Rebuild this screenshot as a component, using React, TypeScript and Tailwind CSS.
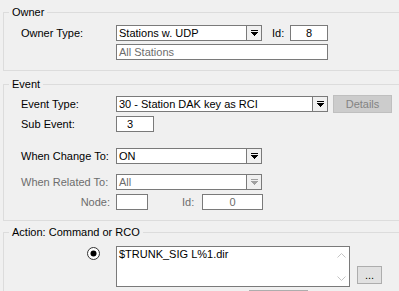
import clsx from "clsx";

function DropArrow({ disabled }: { disabled?: boolean }) {
  return (
    <svg width="7" height="6" viewBox="0 0 7 6" shapeRendering="crispEdges">
      <rect x="0" y="0" width="7" height="1" fill={disabled ? "#a0a0a0" : "#000"} />
      <polygon points="0,2 7,2 4,6 3,6" fill={disabled ? "#a0a0a0" : "#000"} />
    </svg>
  );
}

function Combo({ value, className, disabled }: { value: string; className: string; disabled?: boolean }) {
  return (
    <div className={clsx("flex h-[16px] border border-[#7a7a7a] bg-white", className)}>
      <div className={clsx("flex-1 pl-[2px] leading-[14px]", disabled ? "text-[#6d6d6d]" : "text-black")}>
        {value}
      </div>
      <div className="flex w-[15px] items-center justify-center border-l border-[#7a7a7a] bg-[#f0f0f0]">
        <DropArrow disabled={disabled} />
      </div>
    </div>
  );
}

function Box({ children, className }: { children?: React.ReactNode; className: string }) {
  return (
    <div className={clsx("h-[16px] border border-[#7a7a7a] bg-white leading-[14px]", className)}>
      {children}
    </div>
  );
}

function Chevron({ down }: { down?: boolean }) {
  return (
    <svg width="9" height="5" viewBox="0 0 9 5">
      <polyline
        points={down ? "0.5,0.5 4.5,4.5 8.5,0.5" : "0.5,4.5 4.5,0.5 8.5,4.5"}
        fill="none"
        stroke="#c4c4c4"
        strokeWidth="1"
      />
    </svg>
  );
}

export default function App() {
  return (
    <div className="h-[291px] w-[399px] overflow-hidden bg-[#f0f0f0] font-['Liberation_Sans',Arial,sans-serif] text-[11px] text-black">
      {/* Owner */}
      <fieldset className="ml-[3px] mt-[6px] w-[420px] border border-[#dcdcdc]">
        <legend className="ml-[5px] px-[3px] leading-[13px]">Owner</legend>
        <div className="pl-[17px] pt-[6px] pb-[10px]">
          <div className="flex h-[16px] items-center">
            <div className="w-[95px]">Owner Type:</div>
            <Combo value="Stations w. UDP" className="w-[146px]" />
            <div className="ml-[10px] w-[18px]">Id:</div>
            <Box className="w-[38px] text-center">8</Box>
          </div>
          <div className="mt-[3px] flex">
            <div className="w-[95px]" />
            <Box className="w-[212px] pl-[2px] text-[#6d6d6d]">All Stations</Box>
          </div>
        </div>
      </fieldset>

      {/* Event */}
      <fieldset className="ml-[3px] mt-[7px] w-[420px] border border-[#dcdcdc]">
        <legend className="ml-[5px] px-[3px] leading-[13px]">Event</legend>
        <div className="pl-[17px] pt-[4px] pb-[10px]">
          <div className="flex h-[18px] items-center">
            <div className="w-[95px]">Event Type:</div>
            <Combo value="30 - Station DAK key as RCI" className="w-[212px]" />
            <div className="ml-[5px] flex h-[18px] w-[59px] items-center justify-center border border-[#bfbfbf] bg-[#cccccc] text-[#838383]">
              Details
            </div>
          </div>
          <div className="mt-[3px] flex h-[16px] items-center">
            <div className="w-[95px]">Sub Event:</div>
            <Box className="w-[38px] pl-[10px]">3</Box>
          </div>
          <div className="mt-[16px] flex h-[16px] items-center">
            <div className="w-[95px]">When Change To:</div>
            <Combo value="ON" className="w-[146px]" />
          </div>
          <div className="mt-[10px] flex h-[16px] items-center">
            <div className="w-[95px] text-[#6d6d6d]">When Related To:</div>
            <Combo value="All" className="w-[146px]" disabled />
          </div>
          <div className="mt-[4px] flex h-[16px] items-center text-[#6d6d6d]">
            <div className="w-[95px] pr-[6px] text-right">Node:</div>
            <Box className="w-[32px]" />
            <div className="ml-[34px] w-[20px]">Id:</div>
            <Box className="w-[61px] text-center">0</Box>
          </div>
        </div>
      </fieldset>

      {/* Action */}
      <fieldset className="ml-[3px] mt-[5px] w-[420px] border border-[#dcdcdc]">
        <legend className="ml-[5px] px-[3px] leading-[13px]">Action: Command or RCO</legend>
        <div className="pl-[17px] pt-[7px]">
          <div className="flex items-start">
            <div className="flex w-[95px] justify-end pr-[16px] pt-[1px]">
              <svg width="13" height="13" viewBox="0 0 13 13">
                <circle cx="6.5" cy="6.5" r="6" fill="#fff" stroke="#333" strokeWidth="1" />
                <circle cx="6.5" cy="6.5" r="3" fill="#000" />
              </svg>
            </div>
            <div className="flex h-[41px] w-[234px] border border-[#7a7a7a] bg-white">
              <div className="flex-1 pl-[2px] pt-[1px] leading-[13px]">$TRUNK_SIG L%1.dir</div>
              <div className="flex w-[16px] flex-col">
                <div className="flex h-[16px] items-center justify-center">
                  <Chevron />
                </div>
                <div className="flex-1" />
                <div className="flex h-[16px] items-center justify-center">
                  <Chevron down />
                </div>
              </div>
            </div>
            <div className="ml-[7px] mt-[20px] flex h-[18px] w-[25px] items-center justify-center border border-[#adadad] bg-[#e1e1e1] leading-none">
              ...
            </div>
          </div>
          <div className="ml-[228px] mt-[3px] h-[22px] w-[59px] border border-[#adadad] bg-[#e1e1e1]" />
        </div>
      </fieldset>
    </div>
  );
}
